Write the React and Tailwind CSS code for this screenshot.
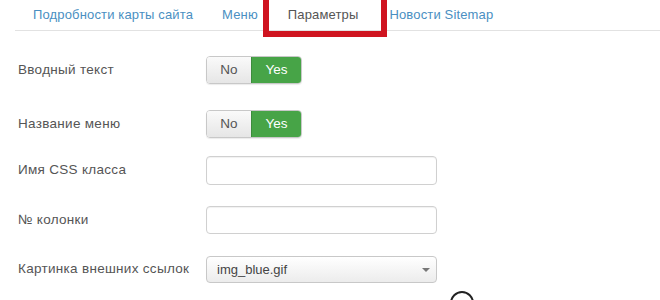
import React from "react";

function Toggle() {
  return (
    <div className="flex h-[28px] w-[96px] rounded-[4px] overflow-hidden border border-[#c8c8c8] shadow-[0_1px_1px_rgba(0,0,0,0.08)] text-[13.5px]">
      <div className="flex w-[44px] items-center justify-center bg-gradient-to-b from-[#fafafa] to-[#e6e6e6] text-[#555]">No</div>
      <div className="flex flex-1 items-center justify-center bg-[#47a447] text-white border-l border-[#3d8b3d]">Yes</div>
    </div>
  );
}

function Row({ label, children, className }) {
  return (
    <div className={"flex items-center " + className}>
      <div className="w-[188px] text-[13.5px] tracking-[0.3px] text-[#555]">{label}</div>
      {children}
    </div>
  );
}

export default function App() {
  return (
    <div className="relative h-[300px] w-[660px] overflow-hidden bg-white font-['Liberation_Sans',Arial,sans-serif]">
      <div className="ml-[15px] flex h-[31px] items-center border-b border-[#e2e2e2] pl-[18px] text-[13px] tracking-[0.15px] text-[#4a8fc2]">
        <div className="mr-[29px]">Подробности карты сайта</div>
        <div className="mr-[30px]">Меню</div>
        <div className="relative mr-[31px] text-[#555]">
          Параметры
          <div className="absolute left-[-25px] top-[-14px] h-[46px] w-[124px] border-[6px] border-[#cf1420]" />
        </div>
        <div>Новости Sitemap</div>
      </div>
      <div className="pl-[18px]">
        <Row label="Вводный текст" className="mt-[25px]"><Toggle /></Row>
        <Row label="Название меню" className="mt-[26px]"><Toggle /></Row>
        <Row label="Имя CSS класса" className="mt-[18px]">
          <div className="h-[29px] w-[231px] rounded-[4px] border border-[#d0d0d0] bg-white shadow-[inset_0_1px_1px_rgba(0,0,0,0.06)]" />
        </Row>
        <Row label="№ колонки" className="mt-[21px]">
          <div className="h-[28px] w-[231px] rounded-[4px] border border-[#d0d0d0] bg-white shadow-[inset_0_1px_1px_rgba(0,0,0,0.06)]" />
        </Row>
        <Row label="Картинка внешних ссылок" className="mt-[22px]">
          <div className="flex h-[27px] w-[231px] items-center justify-between rounded-[4px] border border-[#c8c8c8] bg-gradient-to-b from-white to-[#ececec] pl-[10px] pr-[6px] text-[13px] text-[#444]">
            <span>img_blue.gif</span>
            <span className="h-0 w-0 border-x-[4px] border-t-[4px] border-x-transparent border-t-[#777]" />
          </div>
        </Row>
      </div>
      <div className="absolute left-[450px] top-[291px] h-[24px] w-[24px] rounded-full border-2 border-[#222]" />
    </div>
  );
}
